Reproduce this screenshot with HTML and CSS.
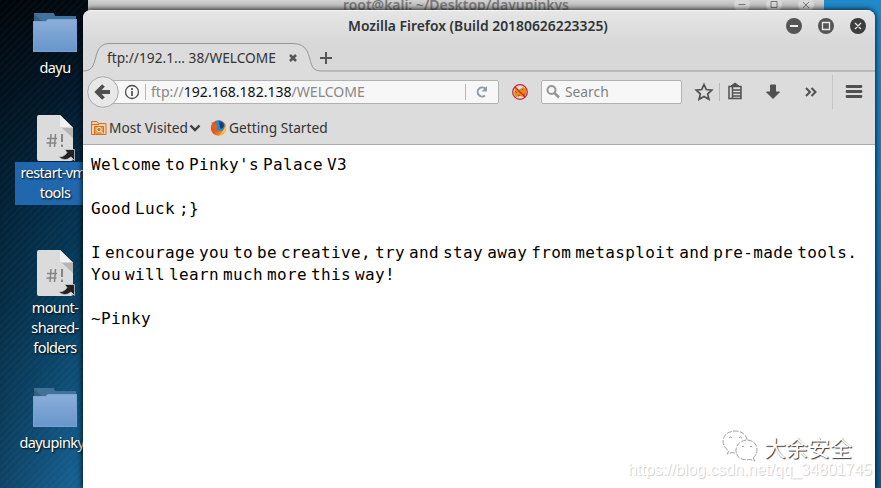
FILE: index.html
```html
<!DOCTYPE html>
<html lang="en">
<head>
<meta charset="utf-8">
<title>Desktop</title>
<link rel="stylesheet" href="styles.css">
</head>
<body>
<svg width="0" height="0" class="defs" aria-hidden="true">
  <defs>
    <linearGradient id="fold" x1="0" y1="0" x2="0" y2="1"><stop offset="0" stop-color="#8bafd9"/><stop offset="1" stop-color="#6795cb"/></linearGradient>
    <linearGradient id="ff" x1="0" y1="0" x2="1" y2="1"><stop offset="0" stop-color="#e8471c"/><stop offset=".5" stop-color="#e2581b"/><stop offset="1" stop-color="#fbc02e"/></linearGradient>
    <symbol id="folder" viewBox="0 0 44 40"><path d="M1 0h20l1 3h21v14H1z" fill="#427199"/><path d="M1 1l10 9H1z" fill="#36617f"/><path d="M0 11V8h13l2-2h29v33H0z" fill="url(#fold)"/><path d="M.5 38V8.500H13l2-2h28.500v32z" fill="none" stroke="#79a4d6"/></symbol>
    <symbol id="script" viewBox="0 0 40 48"><path d="M4 0h21l13 13v31q0 2-2 2H4q-2 0-2-2V2Q2 0 4 0z" fill="#dbdbdb"/><path d="M26 12h12v11z" fill="#b5b5b5"/><path d="M25 0l13 12.500H27q-2 0-2-2z" fill="#f1f1f1"/><path d="M16 19l-1 13M20.500 19l-1 13M12 23.500h10M11.500 28h10" stroke="#858585" stroke-width="1.500" fill="none"/><path d="M27 19v8M27 29.500v2.500" stroke="#858585" stroke-width="2"/><path d="M29.500 34.500h10v11l-3.500-3.500Q30 47.500 23 41.500q6 1 9-4z" fill="#222" stroke="#ddd" stroke-width=".7"/></symbol>
  </defs>
</svg>
<main class="desktop">
  <div class="item i1"><svg width="44" height="40"><use href="#folder"/></svg><span class="label">dayu</span></div>
  <div class="item i2"><svg width="40" height="48"><use href="#script"/></svg><span class="label chosen">restart-vm-<br>tools</span></div>
  <div class="item i3"><svg width="40" height="48"><use href="#script"/></svg><span class="label">mount-<br>shared-<br>folders</span></div>
  <div class="item i4"><svg width="44" height="40"><use href="#folder"/></svg><span class="label">dayupinkys</span></div>

  <div class="terminal"><span class="termtitle">root@kali: ~/Desktop/dayupinkys</span>
    <svg class="termbtns" width="82" height="10" fill="none" stroke="#777"><g fill="#d9d9d9" stroke="none"><circle cx="8" cy="4.500" r="8"/><circle cx="40" cy="4.500" r="8"/><circle cx="72" cy="4.500" r="8"/></g><path d="M4.500 4.500h7M37 1.500h6v6h-6zM69 2l6 6M75 2l-6 6"/></svg>
  </div>

  <section class="window">
    <header class="titlebar">
      <span class="title">Mozilla Firefox (Build 20180626223325)</span>
      <svg class="controls" width="82" height="18"><g fill="#555"><circle cx="9" cy="9" r="8"/><circle cx="41" cy="9" r="8"/><circle cx="73" cy="9" r="8" fill="#3d3d3d"/></g><path d="M5 9h8" stroke="#eee" stroke-width="2"/><path d="M37.500 5.500h7v7h-7zM70 6l6 6M76 6l-6 6" stroke="#e8e8e8" stroke-width="1.300" fill="none"/></svg>
    </header>
    <div class="tabs">
      <svg class="tabshape" width="792" height="32"><path d="M0 28C12 28 11 18 14 10Q17 .5 26 .5H210Q220 .5 224 8C229 17 226 28 238 28H792V32H0z" fill="#dcdcdc"/><path d="M0 28C12 28 11 18 14 10Q17 .5 26 .5H210Q220 .5 224 8C229 17 226 28 238 28H792" fill="none" stroke="#94979a"/></svg>
      <span class="tabname">ftp://192.1... 38/WELCOME</span>
      <svg class="tabicons" width="50" height="16" fill="none" stroke="#555"><path d="M4 5l6 6M10 5l-6 6" stroke-width="2.500"/><path d="M34 8h12M40 2v12" stroke-width="2"/></svg>
    </div>
    <nav class="navbar">
      <svg class="back" width="32" height="32"><circle cx="16" cy="16" r="15.300" fill="#e8e8e8" stroke="#a9a9a9"/><path d="M23 16H11M16.500 9.500L10 16l6.500 6.500" fill="none" stroke="#505050" stroke-width="3.800"/></svg>
      <div class="url">
        <svg class="info" width="16" height="16" fill="none" stroke="#4c4c4c"><circle cx="8" cy="8" r="6.500" stroke-width="1.300"/><path d="M8 7v5M8 4v2" stroke-width="1.700"/></svg>
        <i class="bar"></i>
        <span class="address"><span>ftp://</span><b>192.168.182.138</b><span>/WELCOME</span></span>
        <i class="bar"></i>
        <svg class="reload" width="14" height="14" fill="none" stroke="#8e9ba8" stroke-width="2"><path d="M10 10.500A4.500 4.500 0 1 1 10.500 4"/><path d="M12 1v5.500H6.500z" fill="#8e9ba8" stroke="none"/></svg>
      </div>
      <svg class="blocked" width="18" height="18"><path d="M4 7l-1-2 4 1 1 1 4-3 3 2v6l-2 2-4-1-4 1-2-3z" fill="#ea890c"/><path d="M4 8l2 2M11 6l1 1M7 13l2-1M12 12l2-1" stroke="#925712" fill="none"/><circle cx="9" cy="9" r="7.300" fill="none" stroke="#ce2330" stroke-width="1.300"/><path d="M4 4l10 10" stroke="#ce2330" stroke-width="1.300"/></svg>
      <div class="search"><svg width="16" height="16" fill="none" stroke="#969696"><circle cx="5.500" cy="6" r="4" stroke-width="2"/><path d="M8.500 9l4.500 4.500" stroke-width="2.500"/></svg><span>Search</span></div>
      <svg class="tools" width="180" height="36" fill="none" stroke="#505050"><path d="M15 10.500l2.300 5 5.500.6-4.100 3.700 1.200 5.500-4.900-2.800-4.900 2.800 1.200-5.500-4.100-3.700 5.500-.6z" stroke-width="1.700"/><path d="M30.500 9v18" stroke="#b9b9b9"/><path d="M40 12.500h12v12H40zM43 16h9M43 19h9M43 22h9M43.500 13v11" stroke-width="1.500"/><path d="M42 12l4-3 4 3z" fill="#505050"/><path d="M81.500 11h5v7h4L84 24.500 77.500 18h4z" fill="#505050"/><path d="M117 14l4 4-4 4M122.500 14l4 4-4 4" stroke-width="2"/><path d="M143.500 1v34" stroke="#c4c4c4"/><path d="M158 12.500h14M158 17.500h14M158 22.500h14" stroke-width="2.800" stroke-linecap="round"/></svg>
    </nav>
    <div class="bookmarks">
      <svg width="16" height="16"><path d="M.5 14.500v-13H6l1.500 2h7.500v11z" fill="#f3cfa4" stroke="#d1701f"/><path d="M1 4.500h7" stroke="#d1701f"/><path d="M3.500 6.500h9v8h-9z" fill="#e39a55" stroke="#d1701f"/><circle cx="8" cy="9.500" r="2.200" fill="#d37526" stroke="#fff1dc"/><path d="M9.500 11l3 3" stroke="#fff1dc"/></svg>
      <span class="mv">Most Visited</span>
      <svg class="chev" width="12" height="10"><path d="M1.500 2.500l4.500 4.500 4.500-4.500" fill="none" stroke="#3c3c3c" stroke-width="2.400"/></svg>
      <svg width="17" height="16"><circle cx="8.500" cy="8" r="7.700" fill="url(#ff)"/><path d="M5 1.500Q11-1.500 14.500 4q1 7-4 7Q5 11 5 6z" fill="#2789c9"/><path d="M9 1q5 1 5 5-2 4-4 2z" fill="#173e7b"/><path d="M1.500 2q2 2 5 2l1 3-2 1q1 3 5 2.500-3 3-7 1z" fill="#e85d1d"/><path d="M15.500 5q2 8-6.500 10.500 4-3 6.500-10.500z" fill="#ffc83a"/></svg>
      <span class="gs">Getting Started</span>
    </div>
    <pre class="content">Welcome to Pinky's Palace V3

Good Luck ;}

I encourage you to be creative, try and stay away from metasploit and pre-made tools.
You will learn much more this way!

~Pinky</pre>
  </section>
  <div class="brand">
    <svg width="38" height="32" fill="#fff" stroke="#888" stroke-width=".8" stroke-dasharray="5 1.500"><path d="M7 21l-2 3 5-1.500Q14 24 18 22 27 19 25 9 22 1 13 1 1 2 1 12q1 6 6 9z"/><path d="M31 28l2 3-5-1.500Q14 31 14 20q1-9 11-10 10 1 10 10 0 5-4 8z"/><path d="M7 8q1-2 3 0M17 8q1-2 3 0M20 17q1-2 2 0M28 17q1-2 2 0" fill="none"/></svg>
    <span>大余安全</span>
  </div>
  <div class="watermark">https://blog.csdn.net/qq_34801745</div>
</main>
</body>
</html>
```
FILE: styles.css
```css
* { box-sizing: border-box; }
body { margin: 0; font-family: "Noto Sans", sans-serif; font-size: 15px; color: #333; }
.defs { position: absolute; }
.desktop {
  position: relative; width: 881px; height: 488px; overflow: hidden;
  background:
    linear-gradient(180deg, #2089ca 0, #1d7fbf 120px, #1a6ba6 320px, #125a8b 488px) right / 60px 100% no-repeat,
    repeating-linear-gradient(135deg, rgba(255,255,255,.02) 0 2px, transparent 2px 5px),
    linear-gradient(90deg, rgba(0,0,0,.3), transparent 70px),
    linear-gradient(180deg, #01080f 0, #021a2c 20%, #04304d 42%, #083f61 62%, #0e5079 80%, #165f90 100%);
}
.item { position: absolute; left: 15px; width: 80px; display: flex; flex-direction: column; align-items: center; }
.item svg { flex: none; }
.i1 { top: 13px; } .i2 { top: 115px; } .i3 { top: 250px; } .i4 { top: 388px; }
.label { width: 80px; text-align: center; font-size: 14.500px; line-height: 20px; color: #fff; text-shadow: 1px 1px 2px #000; white-space: nowrap; letter-spacing: -.6px; margin-top: 4px; }
.i2 .label, .i3 .label { margin-top: -1px; }
.chosen { background: #2167ae; height: 43px; }
.terminal { position: absolute; left: 88px; top: 0; width: 736px; height: 12px; background: linear-gradient(#d2d2d2, #aaa); overflow: hidden; }
.termtitle { position: absolute; left: 255px; top: -6px; line-height: 20px; font-weight: 600; color: #777; white-space: nowrap; transform: scaleX(.929); transform-origin: 0 0; }
.termbtns { position: absolute; left: 646px; top: 0; }
.window { position: absolute; left: 83px; top: 10px; width: 792px; height: 478px; border-radius: 8px 8px 0 0; background: #dcdcdc; box-shadow: 0 0 5px 1px rgba(0,0,0,.75); display: flex; flex-direction: column; overflow: hidden; }
.titlebar { height: 33px; flex: none; background: linear-gradient(#e6e6e6, #d8d8d8); display: flex; justify-content: space-between; align-items: flex-start; padding: 6px 8px 0 265px; border-top: 1px solid #f4f4f4; }
.title { font-weight: 600; line-height: 18px; margin-top: -1px; color: #2f3335; white-space: nowrap; transform: scaleX(.925); transform-origin: 0 0; width: 262px; }
.tabs { height: 29px; flex: none; background: #d8d8d8; display: grid; grid-template-columns: 24px 179px 1fr; align-items: center; }
.tabshape { grid-area: 1 / 1 / 2 / 4; align-self: start; }
.tabname { grid-area: 1 / 2; line-height: 20px; margin-bottom: 5px; white-space: nowrap; transform: scaleX(.914); transform-origin: 0 50%; }
.tabicons { grid-area: 1 / 3; margin-bottom: 2px; }
.navbar { height: 39px; flex: none; display: flex; align-items: center; padding-left: 4px; background: #dcdcdc; }
.back { flex: none; z-index: 1; }
.url { width: 394px; height: 24px; margin-left: -14px; background: #f7f7f7; border: 1px solid #b1b1b1; border-radius: 2px; display: flex; align-items: center; flex: none; padding-left: 18px; }
.info { flex: none; }
.bar { width: 1px; height: 16px; background: #b5b5b5; margin-left: 5px; flex: none; }
.address { width: 309px; flex: none; margin-left: 5px; margin-bottom: 2px; color: #888; white-space: nowrap; transform: scaleX(.937); transform-origin: 0 50%; }
.address b { font-weight: 400; color: #111; }
.reload { margin-left: 9px; flex: none; }
.blocked { margin-left: 12px; flex: none; }
.search { width: 141px; height: 24px; margin-left: 12px; border: 1px solid #b1b1b1; border-radius: 2px; background: #f7f7f7; color: #808080; display: flex; align-items: center; padding-left: 4px; gap: 3px; flex: none; }
.search span { margin-bottom: 2px; transform: scaleX(.92); transform-origin: 0 50%; }
.tools { margin-left: 7px; flex: none; }
.bookmarks { height: 34px; flex: none; display: flex; align-items: center; padding-left: 8px; border-bottom: 1px solid #aaa; }
.bookmarks svg { flex: none; }
.mv, .gs { margin-bottom: 2px; white-space: nowrap; transform: scaleX(.915); transform-origin: 0 50%; }
.mv { width: 80px; margin-left: 2px; }
.chev { margin-right: 9px; }
.gs { margin-left: 2px; }
.content { margin: 0; padding: 9px 8px; flex: 1; background: #fff; color: #000; font: 16px/22px "DejaVu Sans Mono", monospace; letter-spacing: .37px; word-spacing: -6px; }
.brand { position: absolute; left: 722px; top: 430px; display: flex; align-items: center; gap: 4px; font: 22px/32px "Noto Sans CJK SC", sans-serif; color: #fff; text-shadow: 1px 1px 1px #333; white-space: nowrap; }
.watermark { position: absolute; left: 628px; top: 460px; font: 16px/20px "Liberation Sans", sans-serif; letter-spacing: -.05px; color: #fff; text-shadow: 1px 1px 1px #ccc; white-space: nowrap; }
```
